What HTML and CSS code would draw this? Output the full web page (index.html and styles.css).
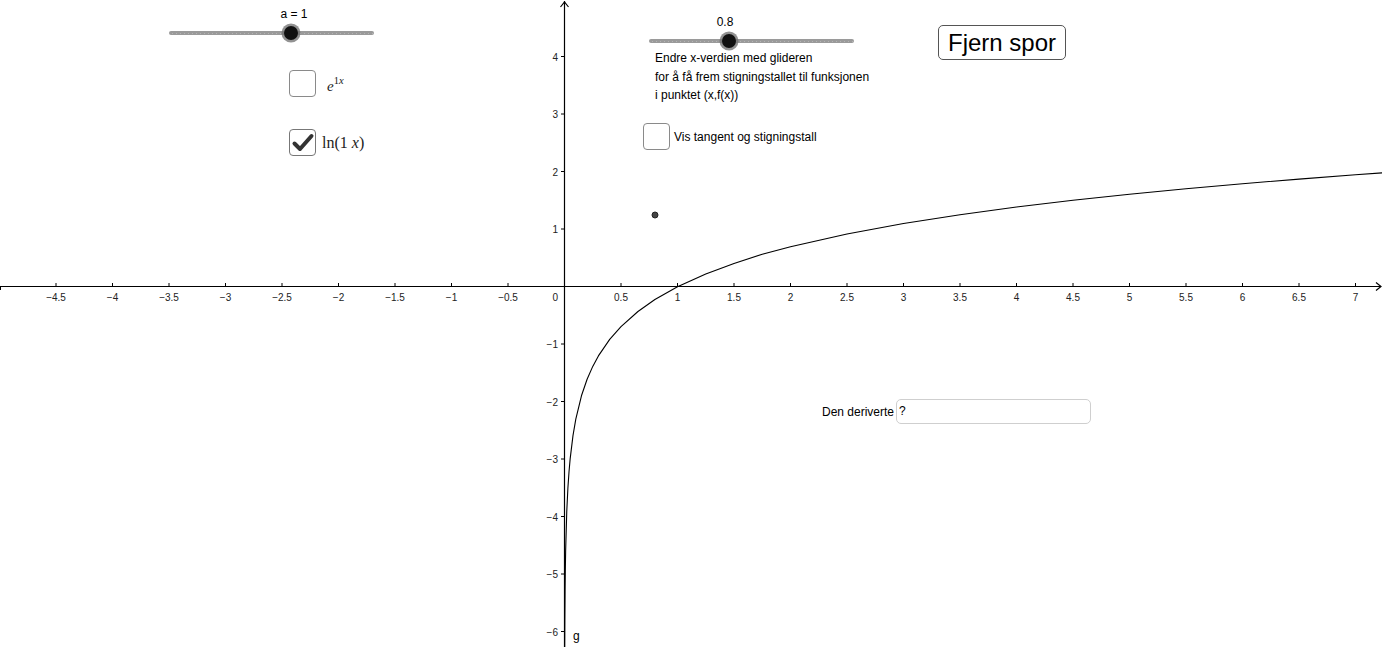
FILE: index.html
```html
<!DOCTYPE html>
<html>
<head>
<meta charset="utf-8">
<link rel="stylesheet" href="styles.css">
</head>
<body>
<div class="applet">
  <svg class="graph" width="1382" height="647" viewBox="0 0 1382 647">
    <g class="axes">
      <line x1="0" y1="286.5" x2="1381" y2="286.5"/>
      <line x1="564.5" y1="1" x2="564.5" y2="647"/>
      <polyline points="560.5,7 564.5,2 568.5,7" fill="none"/>
      <polyline points="1376,282.5 1381,286.5 1376,290.5" fill="none"/>
    </g>
    <g class="ticks">
      <line x1="0.5" y1="286.5" x2="0.5" y2="290"/>
      <line x1="56" y1="283" x2="56" y2="286.5"/>
      <line x1="112.5" y1="283" x2="112.5" y2="286.5"/>
      <line x1="169" y1="283" x2="169" y2="286.5"/>
      <line x1="225.5" y1="283" x2="225.5" y2="286.5"/>
      <line x1="282" y1="283" x2="282" y2="286.5"/>
      <line x1="338.5" y1="283" x2="338.5" y2="286.5"/>
      <line x1="395" y1="283" x2="395" y2="286.5"/>
      <line x1="451.5" y1="283" x2="451.5" y2="286.5"/>
      <line x1="508" y1="283" x2="508" y2="286.5"/>
      <line x1="621" y1="283" x2="621" y2="286.5"/>
      <line x1="677.5" y1="283" x2="677.5" y2="286.5"/>
      <line x1="734" y1="283" x2="734" y2="286.5"/>
      <line x1="790.5" y1="283" x2="790.5" y2="286.5"/>
      <line x1="847" y1="283" x2="847" y2="286.5"/>
      <line x1="903.5" y1="283" x2="903.5" y2="286.5"/>
      <line x1="960" y1="283" x2="960" y2="286.5"/>
      <line x1="1016.5" y1="283" x2="1016.5" y2="286.5"/>
      <line x1="1073" y1="283" x2="1073" y2="286.5"/>
      <line x1="1129.5" y1="283" x2="1129.5" y2="286.5"/>
      <line x1="1186" y1="283" x2="1186" y2="286.5"/>
      <line x1="1242.5" y1="283" x2="1242.5" y2="286.5"/>
      <line x1="1299" y1="283" x2="1299" y2="286.5"/>
      <line x1="1355.5" y1="283" x2="1355.5" y2="286.5"/>
      <line x1="561" y1="56.5" x2="564.5" y2="56.5"/>
      <line x1="561" y1="114" x2="564.5" y2="114"/>
      <line x1="561" y1="171.5" x2="564.5" y2="171.5"/>
      <line x1="561" y1="229" x2="564.5" y2="229"/>
      <line x1="561" y1="344" x2="564.5" y2="344"/>
      <line x1="561" y1="401.5" x2="564.5" y2="401.5"/>
      <line x1="561" y1="459" x2="564.5" y2="459"/>
      <line x1="561" y1="516.5" x2="564.5" y2="516.5"/>
      <line x1="561" y1="574" x2="564.5" y2="574"/>
      <line x1="561" y1="631.5" x2="564.5" y2="631.5"/>
    </g>
    <g class="xlabels">
      <text x="56" y="301">−4.5</text>
      <text x="112.5" y="301">−4</text>
      <text x="169" y="301">−3.5</text>
      <text x="225.5" y="301">−3</text>
      <text x="282" y="301">−2.5</text>
      <text x="338.5" y="301">−2</text>
      <text x="395" y="301">−1.5</text>
      <text x="451.5" y="301">−1</text>
      <text x="508" y="301">−0.5</text>
      <text x="621" y="301">0.5</text>
      <text x="677.5" y="301">1</text>
      <text x="734" y="301">1.5</text>
      <text x="790.5" y="301">2</text>
      <text x="847" y="301">2.5</text>
      <text x="903.5" y="301">3</text>
      <text x="960" y="301">3.5</text>
      <text x="1016.5" y="301">4</text>
      <text x="1073" y="301">4.5</text>
      <text x="1129.5" y="301">5</text>
      <text x="1186" y="301">5.5</text>
      <text x="1242.5" y="301">6</text>
      <text x="1299" y="301">6.5</text>
      <text x="1355.5" y="301">7</text>
    </g>
    <g class="ylabels">
      <text x="558" y="301">0</text>
      <text x="558" y="60.5">4</text>
      <text x="558" y="118">3</text>
      <text x="558" y="175.5">2</text>
      <text x="558" y="233">1</text>
      <text x="558" y="348">−1</text>
      <text x="558" y="405.5">−2</text>
      <text x="558" y="463">−3</text>
      <text x="558" y="520.5">−4</text>
      <text x="558" y="578">−5</text>
      <text x="558" y="635.5">−6</text>
    </g>
    <polyline class="curve" points="564.67,660.6 564.7,647 564.84,620.7 565.07,591.3 565.29,572 565.63,551.5 566.76,511.6 567.89,488.3 569.02,471.8 570.15,458.9 572.98,435.6 575.8,419.1 581.45,395.8 587.1,379.2 592.75,366.4 598.4,355.9 609.7,339.4 621,326.6 637.95,311.5 654.9,299.5 677.5,286.7 705.75,273.9 734,263.4 762.25,254.2 790.5,246.8 847,234 903.5,223.5 960,214.7 1016.5,207 1073,200.2 1129.5,194.2 1186,188.7 1242.5,183.7 1299,179.1 1355.5,174.8 1383.75,172.8"/>
    <circle class="pt" cx="655" cy="215" r="3"/>
    <text class="glabel" x="573" y="640">g</text>
  </svg>

  <div class="slider slider-a">
    <div class="track"></div>
    <div class="knob knob-a"></div>
    <div class="slider-val val-a">a = 1</div>
  </div>

  <div class="slider slider-b">
    <div class="track"></div>
    <div class="knob knob-b"></div>
    <div class="slider-val val-b">0.8</div>
  </div>

  <div class="info">
    <p>Endre x-verdien med glideren</p>
    <p>for å få frem stigningstallet til funksjonen</p>
    <p>i punktet (x,f(x))</p>
  </div>

  <div class="cb-row cb-exp">
    <span class="checkbox"></span>
    <span class="math"><i>e</i><sup>1<i>x</i></sup></span>
  </div>

  <div class="cb-row cb-ln">
    <span class="checkbox checked">
      <svg width="24" height="24" viewBox="0 0 24 24"><path d="M3.5 12.5 L9 18 L20.5 5" fill="none" stroke="#333" stroke-width="4" stroke-linecap="round" stroke-linejoin="round"/></svg>
    </span>
    <span class="math">ln(1 <i>x</i>)</span>
  </div>

  <div class="cb-row cb-tan">
    <span class="checkbox"></span>
    <span class="cb-text">Vis tangent og stigningstall</span>
  </div>

  <button class="btn-spor">Fjern spor</button>

  <div class="deriv-row">
    <span class="deriv-label">Den deriverte</span>
    <span class="deriv-input">?</span>
  </div>
</div>
</body>
</html>
```

FILE: styles.css
```css
html, body {
  margin: 0;
  padding: 0;
  background: #fff;
}

.applet {
  position: relative;
  width: 1382px;
  height: 647px;
  overflow: hidden;
  background: #fff;
  font-family: "Liberation Sans", Arial, sans-serif;
  color: #000;
}

.graph {
  position: absolute;
  left: 0;
  top: 0;
}

.axes line,
.axes polyline {
  stroke: #000;
  stroke-width: 1.2;
}

.ticks line {
  stroke: #000;
  stroke-width: 1;
}

.xlabels text {
  font-family: "Liberation Sans", Arial, sans-serif;
  font-size: 10px;
  fill: #222;
  text-anchor: middle;
}

.ylabels text {
  font-family: "Liberation Sans", Arial, sans-serif;
  font-size: 10px;
  fill: #222;
  text-anchor: end;
}

.curve {
  fill: none;
  stroke: #000;
  stroke-width: 1.1;
  stroke-linejoin: round;
}

.pt {
  fill: #444;
  stroke: #222;
  stroke-width: 1;
}

.glabel {
  font-family: "Liberation Sans", Arial, sans-serif;
  font-size: 12px;
  fill: #000;
}

/* sliders */
.slider {
  position: absolute;
  height: 20px;
}

.slider-a {
  left: 169px;
  top: 23px;
  width: 205px;
}

.slider-b {
  left: 649px;
  top: 31px;
  width: 205px;
}

.track {
  position: absolute;
  left: 0;
  right: 0;
  top: 8px;
  height: 4px;
  border-radius: 2px;
  background-color: #9a9a9a;
  background-image: repeating-linear-gradient(90deg, transparent 0, transparent 3px, #b4b4b4 3px, #b4b4b4 4px);
  background-size: 100% 1px;
  background-position: 0 2px;
  background-repeat: no-repeat;
}

.knob {
  position: absolute;
  top: 3px;
  width: 14px;
  height: 14px;
  border-radius: 50%;
  background: #111;
  box-shadow: 0 0 0 2.5px rgba(110, 110, 110, 0.75);
}

.knob-a { left: 115px; }
.knob-b { left: 73px; }

.slider-val {
  position: absolute;
  font-size: 12px;
  line-height: 14px;
  color: #000;
  white-space: nowrap;
  transform: translateX(-50%);
}

.val-a { left: 125px; top: -16px; }
.val-b { left: 76px; top: -16px; }

/* info text */
.info {
  position: absolute;
  left: 655px;
  top: 49px;
  font-size: 12px;
  line-height: 18.5px;
}

.info p {
  margin: 0;
  white-space: nowrap;
}

/* checkboxes */
.cb-row {
  position: absolute;
  display: flex;
  align-items: center;
}

.checkbox {
  box-sizing: border-box;
  width: 27px;
  height: 27px;
  border: 1.5px solid #8a8a8a;
  border-radius: 4px;
  background: #fff;
  display: flex;
  align-items: center;
  justify-content: center;
  flex: none;
}

.checkbox.checked {
  border-color: #777;
}

.cb-exp {
  left: 289px;
  top: 70px;
  gap: 11px;
}

.cb-ln {
  left: 289px;
  top: 129px;
  gap: 6px;
}

.cb-tan {
  left: 643px;
  top: 123px;
  gap: 4px;
}

.math {
  font-family: "Liberation Serif", "Times New Roman", serif;
  font-size: 16px;
  color: #222;
  white-space: nowrap;
}

.cb-exp .math {
  font-size: 15px;
  margin-top: 6px;
}

.math sup {
  font-size: 10.5px;
  vertical-align: 7px;
  line-height: 0;
}

.cb-text {
  font-size: 12px;
  white-space: nowrap;
}

/* button */
.btn-spor {
  position: absolute;
  left: 938px;
  top: 25px;
  width: 128px;
  height: 35px;
  box-sizing: border-box;
  border: 1px solid #555;
  border-radius: 5px;
  background: #fff;
  font-family: "Liberation Sans", Arial, sans-serif;
  font-size: 24px;
  color: #000;
  padding: 0;
  line-height: 33px;
  text-align: center;
}

/* derivative input */
.deriv-row {
  position: absolute;
  left: 822px;
  top: 399px;
  display: flex;
  align-items: center;
  gap: 2px;
}

.deriv-label {
  font-size: 12px;
  white-space: nowrap;
}

.deriv-input {
  box-sizing: border-box;
  width: 195px;
  height: 25px;
  border: 1px solid #cfcfcf;
  border-radius: 5px;
  font-size: 12px;
  line-height: 23px;
  padding-left: 2px;
}
```
